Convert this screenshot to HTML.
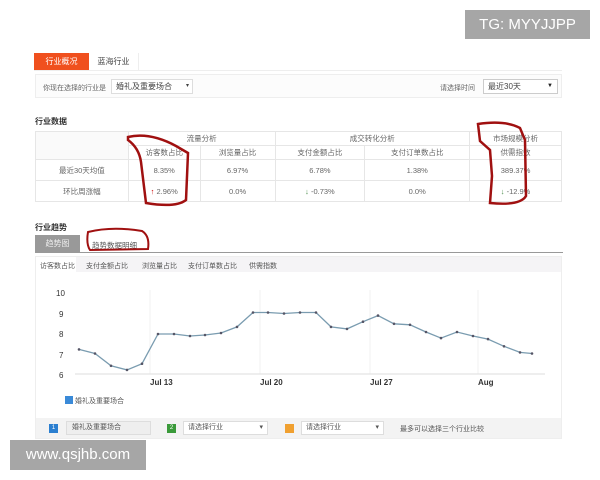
<!DOCTYPE html>
<html><head><meta charset="utf-8"><style>
*{margin:0;padding:0;box-sizing:border-box}
body{width:600px;height:480px;background:#fff;position:relative;overflow:hidden;font-family:"Liberation Sans","Noto Sans CJK SC",sans-serif;font-size:8px;color:#555}
.a{position:absolute}
table{border-collapse:collapse;position:absolute;left:35px;top:131px;width:527px;font-size:7.5px;color:#666}
td{border:1px solid #e6e6e6;text-align:center;height:14px}
</style></head><body>
<div class="a" style="left:465px;top:10px;width:125px;height:29px;background:#a6a6a6;color:#fff;font-size:15px;line-height:29px;text-align:center">TG: MYYJJPP</div>

<div class="a" style="left:34px;top:53px;width:55px;height:17px;background:#f0501e;color:#fff;text-align:center;line-height:17px">行业概况</div>
<div class="a" style="left:89px;top:53px;width:50px;height:17px;color:#444;text-align:center;line-height:17px;border-right:1px solid #eee">蓝海行业</div>
<div class="a" style="left:34px;top:70px;width:528px;height:1px;background:#eee"></div>
<div class="a" style="left:35px;top:74px;width:527px;height:24px;border:1px solid #eee;background:#fcfcfc"></div>
<div class="a" style="left:43px;top:83px;color:#666;font-size:7px">你现在选择的行业是</div>
<div class="a" style="left:111px;top:79px;width:82px;height:15px;border:1px solid #ddd;background:#fff;padding-left:4px;line-height:13px;color:#444">婚礼及重要场合<span style="position:absolute;right:3px;font-size:6px">▾</span></div>
<div class="a" style="left:440px;top:83px;color:#666;font-size:7px">请选择时间</div>
<div class="a" style="left:483px;top:79px;width:75px;height:15px;border:1px solid #ccc;background:#fff;padding-left:4px;line-height:13px;color:#444">最近30天<span style="position:absolute;right:4px;font-size:6px;color:#222">▼</span></div>

<div class="a" style="left:35px;top:116px;font-weight:bold;color:#333;font-size:8px">行业数据</div>
<table>
<tr><td rowspan="2" style="width:93px;background:#fafafa"></td><td colspan="2">流量分析</td><td colspan="2">成交转化分析</td><td style="width:92px">市场规模分析</td></tr>
<tr><td style="width:72px">访客数占比</td><td style="width:75px">浏览量占比</td><td style="width:90px">支付金额占比</td><td style="width:105px">支付订单数占比</td><td>供需指数</td></tr>
<tr><td style="height:21px">最近30天均值</td><td>8.35%</td><td>6.97%</td><td>6.78%</td><td>1.38%</td><td>389.37%</td></tr>
<tr><td style="height:21px">环比周涨幅</td><td><span style="color:#c00">↑</span> 2.96%</td><td>0.0%</td><td><span style="color:#484">↓</span> -0.73%</td><td>0.0%</td><td><span style="color:#484">↓</span> -12.9%</td></tr>
</table>
<svg class="a" style="left:0;top:0" width="600" height="480">
<path d="M128 137 Q150 132 176 146 L188 153 L186 200 Q176 208 146 203 L141 162 Q139 148 128 140Z" fill="none" stroke="#a01010" stroke-width="2.5"/>
<path d="M478 124 Q505 120 520 128 L525 140 L526 196 Q520 206 490 203 L492 176 L490 150 L480 141Z" fill="none" stroke="#a01010" stroke-width="2.5"/>
</svg>

<div class="a" style="left:35px;top:222px;font-weight:bold;color:#333">行业趋势</div>
<div class="a" style="left:35px;top:235px;width:45px;height:17px;background:#999;color:#eee;text-align:center;line-height:17px">趋势图</div>
<div class="a" style="left:92px;top:240px;color:#555;font-size:7.5px">趋势数据明细</div>
<svg class="a" style="left:0;top:0" width="600" height="480">
<path d="M88 232 Q112 226 142 231 Q150 236 148 249 L90 250 Q86 244 88 232Z" fill="none" stroke="#a01010" stroke-width="2"/>
</svg>
<div class="a" style="left:35px;top:252px;width:528px;height:1px;background:#999"></div>
<div class="a" style="left:35px;top:256px;width:527px;height:183px;border:1px solid #eee"></div>
<div class="a" style="left:36px;top:257px;width:525px;height:15px;background:#f5f4f6"></div>
<div class="a" style="left:36px;top:257px;width:40px;height:16px;background:#fff"></div>
<div class="a" style="left:40px;top:261px;color:#555;font-size:7px">访客数占比</div>
<div class="a" style="left:86px;top:261px;font-size:7px">支付金额占比</div>
<div class="a" style="left:142px;top:261px;font-size:7px">浏览量占比</div>
<div class="a" style="left:188px;top:261px;font-size:7px">支付订单数占比</div>
<div class="a" style="left:249px;top:261px;font-size:7px">供需指数</div>
<svg class="a" style="left:0;top:0" width="600" height="480" font-family="Liberation Sans" font-size="8" fill="#333">
<g stroke="#f2f2f2"><line x1="150" y1="290" x2="150" y2="374"/><line x1="260" y1="290" x2="260" y2="374"/><line x1="370" y1="290" x2="370" y2="374"/><line x1="478" y1="290" x2="478" y2="374"/></g>
<line x1="75" y1="374" x2="545" y2="374" stroke="#ddd"/>
<text x="56" y="296">10</text><text x="59" y="317">9</text><text x="59" y="337">8</text><text x="59" y="358">7</text><text x="59" y="378">6</text>
<text x="150" y="385" font-weight="bold">Jul 13</text><text x="260" y="385" font-weight="bold">Jul 20</text><text x="370" y="385" font-weight="bold">Jul 27</text><text x="478" y="385" font-weight="bold">Aug</text>
<polyline fill="none" stroke="#7a9cb0" stroke-width="1.3" points="79,349.4 95,353.5 111,365.8 127,369.9 142,363.7 158,334 174,334 190,336 205,335 221,333 237,326.9 253,312.5 268,312.5 284,313.5 300,312.5 316,312.5 331,326.9 347,328.9 363,321.7 378,315.6 394,323.8 410,324.8 426,332 441,338.1 457,332 473,336 488,339.1 504,346.3 520,352.4 532,353.5"/>
<g fill="#556"><circle cx="79" cy="349.4" r="1.3"/><circle cx="95" cy="353.5" r="1.3"/><circle cx="111" cy="365.8" r="1.3"/><circle cx="127" cy="369.9" r="1.3"/><circle cx="142" cy="363.7" r="1.3"/><circle cx="158" cy="334" r="1.3"/><circle cx="174" cy="334" r="1.3"/><circle cx="190" cy="336" r="1.3"/><circle cx="205" cy="335" r="1.3"/><circle cx="221" cy="333" r="1.3"/><circle cx="237" cy="326.9" r="1.3"/><circle cx="253" cy="312.5" r="1.3"/><circle cx="268" cy="312.5" r="1.3"/><circle cx="284" cy="313.5" r="1.3"/><circle cx="300" cy="312.5" r="1.3"/><circle cx="316" cy="312.5" r="1.3"/><circle cx="331" cy="326.9" r="1.3"/><circle cx="347" cy="328.9" r="1.3"/><circle cx="363" cy="321.7" r="1.3"/><circle cx="378" cy="315.6" r="1.3"/><circle cx="394" cy="323.8" r="1.3"/><circle cx="410" cy="324.8" r="1.3"/><circle cx="426" cy="332" r="1.3"/><circle cx="441" cy="338.1" r="1.3"/><circle cx="457" cy="332" r="1.3"/><circle cx="473" cy="336" r="1.3"/><circle cx="488" cy="339.1" r="1.3"/><circle cx="504" cy="346.3" r="1.3"/><circle cx="520" cy="352.4" r="1.3"/><circle cx="532" cy="353.5" r="1.3"/></g>
<rect x="65" y="396" width="8" height="8" fill="#3a8ad8"/>
<text x="75" y="403" font-size="7" fill="#555">婚礼及重要场合</text>
</svg>
<div class="a" style="left:36px;top:418px;width:525px;height:20px;background:#f3f3f3"></div>
<div class="a" style="left:49px;top:424px;width:9px;height:9px;background:#2b7fd0;color:#fff;font-size:6px;text-align:center;line-height:9px">1</div>
<div class="a" style="left:66px;top:421px;width:85px;height:14px;border:1px solid #ddd;background:#eee;padding-left:5px;line-height:12px;font-size:7px">婚礼及重要场合</div>
<div class="a" style="left:167px;top:424px;width:9px;height:9px;background:#3a9a3a;color:#fff;font-size:6px;text-align:center;line-height:9px">2</div>
<div class="a" style="left:183px;top:421px;width:85px;height:14px;border:1px solid #ddd;background:#fff;padding-left:4px;line-height:12px;font-size:7px">请选择行业<span style="position:absolute;right:4px">▾</span></div>
<div class="a" style="left:285px;top:424px;width:9px;height:9px;background:#f0a030"></div>
<div class="a" style="left:301px;top:421px;width:83px;height:14px;border:1px solid #ddd;background:#fff;padding-left:4px;line-height:12px;font-size:7px">请选择行业<span style="position:absolute;right:4px">▾</span></div>
<div class="a" style="left:400px;top:424px;font-size:7px">最多可以选择三个行业比较</div>

<div class="a" style="left:10px;top:440px;width:136px;height:30px;background:#a6a6a6;color:#fff;font-size:15px;line-height:30px;text-align:center">www.qsjhb.com</div>
</body></html>
